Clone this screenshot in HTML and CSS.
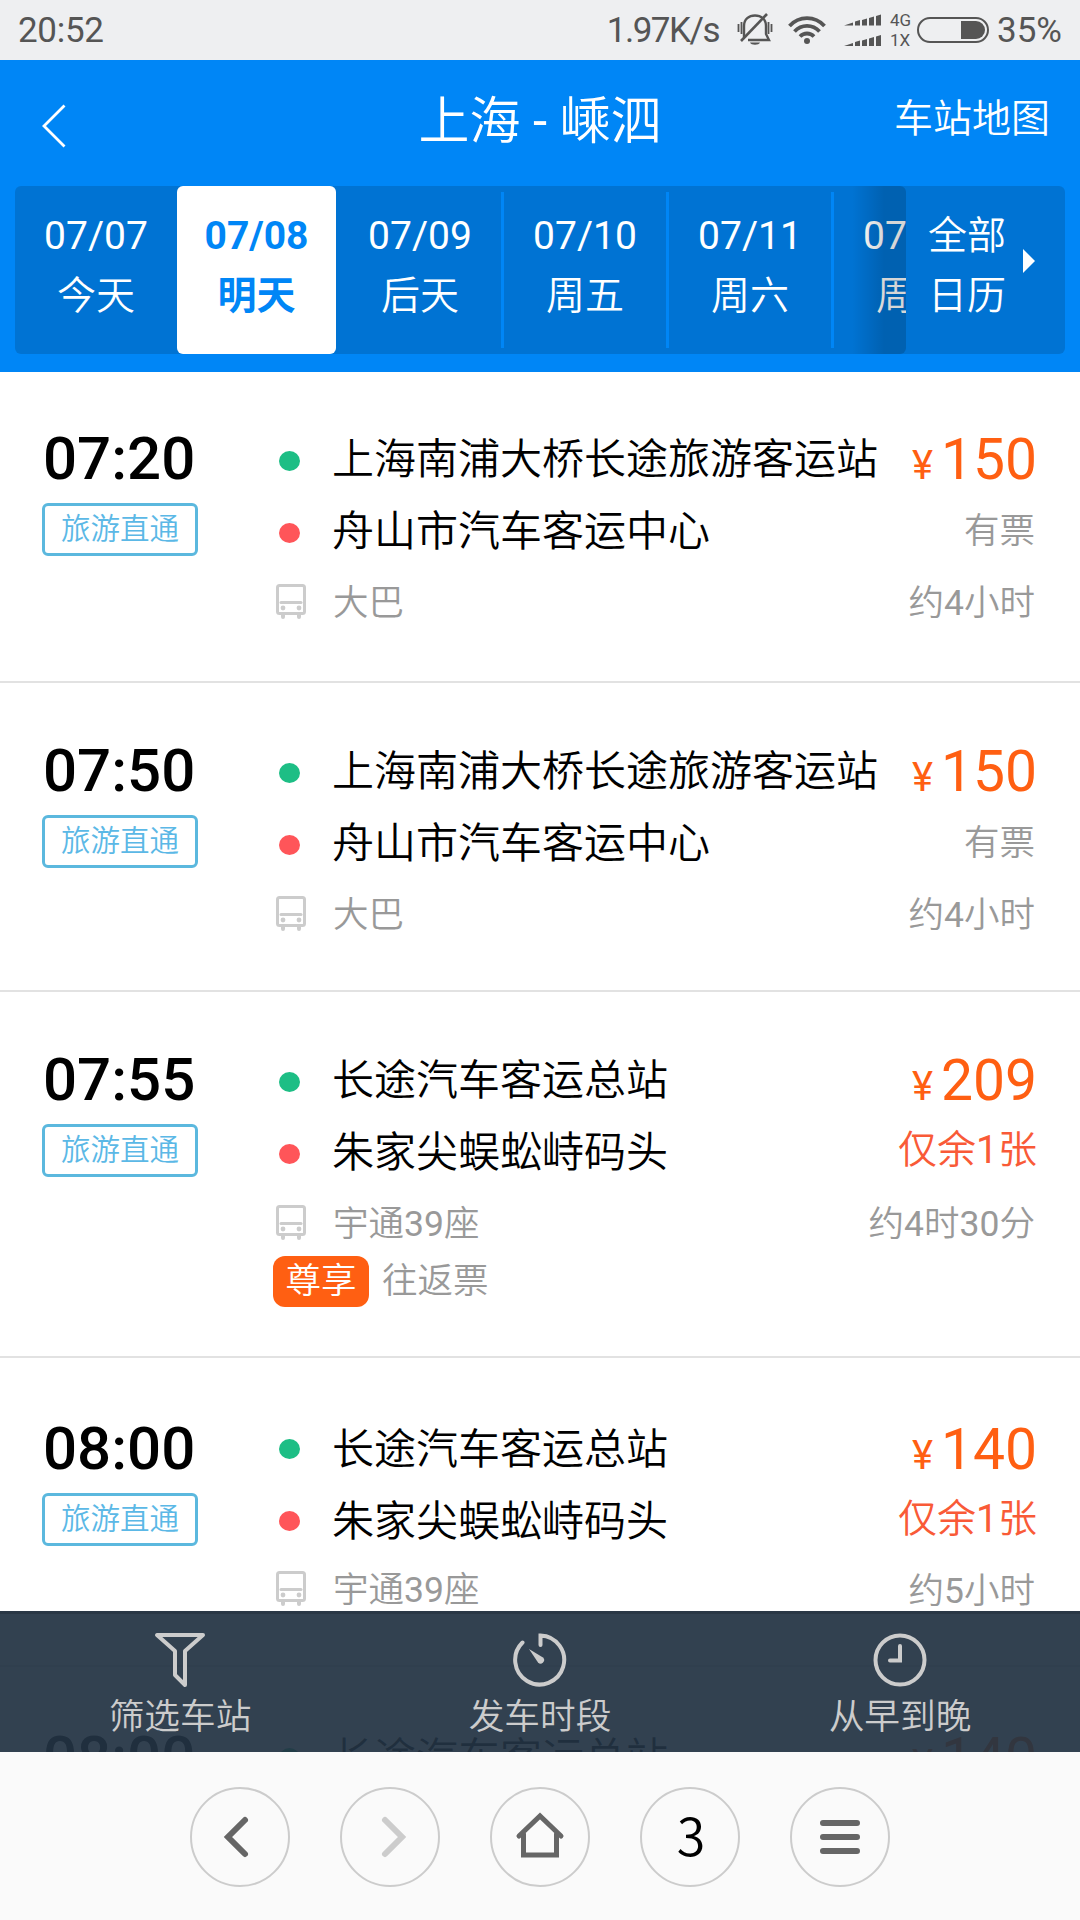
FILE: index.html
```html
<!DOCTYPE html>
<html lang="zh-CN">
<head>
  <meta charset="UTF-8">
  <title>上海 - 嵊泗</title>
  <link rel="stylesheet" href="styles.css">
</head>
<body>

<svg class="sprite" width="0" height="0">
  <symbol id="bus" viewBox="0 0 32 36">
    <rect x="2.5" y="2.5" width="27" height="28" rx="2" fill="none" stroke="#ccc" stroke-width="3"/>
    <path d="M6 19.5h20" stroke="#ccc" stroke-width="3" stroke-linecap="round"/>
    <circle cx="8" cy="25" r="2.4" fill="#ccc"/>
    <circle cx="24" cy="25" r="2.4" fill="#ccc"/>
    <path d="M8 31v3M24 31v3" stroke="#ccc" stroke-width="4" stroke-linecap="round"/>
  </symbol>
</svg>

<div class="status">
  <span class="clock">20:52</span>
  <span class="speed">1.97K/s</span>
  <svg class="bell" width="36" height="34" viewBox="0 0 36 34" fill="none" stroke="#555" stroke-width="2.4">
    <path d="M7 24V13C7 6 12 2.5 18 2.5S29 6 29 13v8l3 6H11"/>
    <path d="M30 1L4 28" stroke-width="2.6"/>
    <path d="M1.5 11v8M4.5 9v12M31.5 9v12M34.5 11v8" stroke-width="1.8"/>
    <path d="M13 29.5h10c-1 3-9 3-10 0z" fill="#555" stroke="none"/>
  </svg>
  <svg class="wifi" width="38" height="28" viewBox="0 0 38 28" fill="none" stroke="#555" stroke-width="3.8">
    <path d="M1.5 10C11-.5 27-.5 36.5 10"/>
    <path d="M6.5 15.5c7-7.5 18-7.5 25 0"/>
    <path d="M12 20.5c4-4 10-4 14 0"/>
    <circle cx="19" cy="25" r="3" fill="#555" stroke="none"/>
  </svg>
  <svg class="signal" width="37" height="33" viewBox="0 0 37 33" fill="#555">
    <path id="bars" d="M0 11.5l9-3v3zM11 7.5l5-1.5v5.5h-5zM18 6l5-1.500v7h-5zM25 4l5-1.500v9h-5zM32 2l5-1.500v11h-5z"/>
    <use href="#bars" y="20.5"/>
  </svg>
  <div class="net"><span>4G</span><span>1X</span></div>
  <div class="battery"><i></i></div>
  <span class="percent">35%</span>
</div>

<div class="header">
  <div class="nav">
    <svg class="back" width="24" height="44" viewBox="0 0 24 44" fill="none" stroke="#fff" stroke-width="2.8">
      <path d="M22.5 1.5L2 22l20.5 20.5"/>
    </svg>
    <h1>上海 <em>-</em> 嵊泗</h1>
    <a class="map">车站地图</a>
  </div>
  <div class="dates">
    <div class="days">
      <div class="day first"><em>07/07</em><span>今天</span></div>
      <div class="day active"><em>07/08</em><span>明天</span></div>
      <div class="day"><em>07/09</em><span>后天</span></div>
      <div class="day"><em>07/10</em><span>周五</span></div>
      <div class="day"><em>07/11</em><span>周六</span></div>
      <div class="day"><em>07/12</em><span>周日</span></div>
    </div>
    <div class="all"><p>全部<br>日历</p><i></i></div>
  </div>
</div>

<div class="main">
  <div class="item top">
    <div class="left"><div class="time">07:20</div><span class="label">旅游直通</span></div>
    <div class="route">
      <div class="row"><i class="dot green"></i>上海南浦大桥长途旅游客运站</div>
      <div class="row"><i class="dot red"></i>舟山市汽车客运中心</div>
      <div class="row gray"><svg class="bus"><use href="#bus"/></svg>大巴</div>
    </div>
    <div class="right">
      <div class="price"><small>¥</small>150</div>
      <div class="ticket">有票</div>
      <div class="ticket">约<em>4</em>小时</div>
    </div>
  </div>

  <div class="item">
    <div class="left"><div class="time">07:50</div><span class="label">旅游直通</span></div>
    <div class="route">
      <div class="row"><i class="dot green"></i>上海南浦大桥长途旅游客运站</div>
      <div class="row"><i class="dot red"></i>舟山市汽车客运中心</div>
      <div class="row gray"><svg class="bus"><use href="#bus"/></svg>大巴</div>
    </div>
    <div class="right">
      <div class="price"><small>¥</small>150</div>
      <div class="ticket">有票</div>
      <div class="ticket">约<em>4</em>小时</div>
    </div>
  </div>

  <div class="item tall">
    <div class="left"><div class="time">07:55</div><span class="label">旅游直通</span></div>
    <div class="route">
      <div class="row"><i class="dot green"></i>长途汽车客运总站</div>
      <div class="row"><i class="dot red"></i>朱家尖蜈蚣峙码头</div>
      <div class="row gray"><svg class="bus"><use href="#bus"/></svg><span>宇通<em>39</em>座</span></div>
      <div class="extra"><b>尊享</b><span>往返票</span></div>
    </div>
    <div class="right">
      <div class="price"><small>¥</small>209</div>
      <div class="ticket few">仅余<em>1</em>张</div>
      <div class="ticket">约<em>4</em>时<em>30</em>分</div>
    </div>
  </div>

  <div class="item low">
    <div class="left"><div class="time">08:00</div><span class="label">旅游直通</span></div>
    <div class="route">
      <div class="row"><i class="dot green"></i>长途汽车客运总站</div>
      <div class="row"><i class="dot red"></i>朱家尖蜈蚣峙码头</div>
      <div class="row gray"><svg class="bus"><use href="#bus"/></svg><span>宇通<em>39</em>座</span></div>
    </div>
    <div class="right">
      <div class="price"><small>¥</small>140</div>
      <div class="ticket few">仅余<em>1</em>张</div>
      <div class="ticket">约<em>5</em>小时</div>
    </div>
  </div>

  <div class="item low">
    <div class="left"><div class="time">08:00</div></div>
    <div class="route">
      <div class="row"><i class="dot green"></i>长途汽车客运总站</div>
    </div>
    <div class="right">
      <div class="price"><small>¥</small>140</div>
    </div>
  </div>

  <div class="filter">
    <div class="tab">
      <svg width="56" height="56" viewBox="0 0 56 56" fill="none" stroke="#ccc" stroke-width="4" stroke-linejoin="round">
        <path d="M5 3h46L33 19v34l-10-10V19z"/>
      </svg>
      <span>筛选车站</span>
    </div>
    <div class="tab">
      <svg width="56" height="56" viewBox="0 0 56 56" fill="none" stroke="#ccc" stroke-width="4" stroke-linecap="round">
        <path d="M28.5 13V3.5a24.5 24.5 0 1 1-18 7"/>
        <path d="M17 17l14 8.5a3.5 3.5 0 0 1-5 5z" fill="#ccc" stroke="none"/>
      </svg>
      <span>发车时段</span>
    </div>
    <div class="tab">
      <svg width="56" height="56" viewBox="0 0 56 56" fill="none" stroke="#ccc" stroke-width="4" stroke-linecap="round">
        <circle cx="28" cy="28" r="24.5"/>
        <path d="M28 14v14.5h-10"/>
      </svg>
      <span>从早到晚</span>
    </div>
  </div>
</div>

<div class="toolbar">
  <div class="circle">
    <svg width="60" height="60" viewBox="0 0 60 60"><path d="M35 13L18 30l17 17"/></svg>
  </div>
  <div class="circle off">
    <svg width="60" height="60" viewBox="0 0 60 60"><path d="M25 13l17 17-17 17"/></svg>
  </div>
  <div class="circle">
    <svg class="home" width="60" height="60" viewBox="0 0 60 60"><path d="M9 29L30 9l21 20M13.5 27v21h33V27"/></svg>
  </div>
  <div class="circle num">3</div>
  <div class="circle">
    <svg class="menu" width="60" height="60" viewBox="0 0 60 60"><path d="M13 16h34M13 30h34M13 44h34"/></svg>
  </div>
</div>

</body>
</html>
```

FILE: styles.css
```css
* {
  box-sizing: border-box;
}

body {
  margin: 0;
  width: 1080px;
  height: 1920px;
  display: flex;
  flex-direction: column;
  overflow: hidden;
  background: #fff;
  color: #000;
  font-family: Roboto, "Noto Sans CJK SC", sans-serif;
  font-weight: 350;
}

/* 数字用常规字重 */
em {
  font-style: normal;
  font-weight: 400;
}

.sprite {
  display: none;
}

/* 状态栏 */
.status {
  height: 60px;
  flex: none;
  display: flex;
  align-items: center;
  padding: 0 18px;
  background: #eeeff1;
  color: #555;
  font-size: 35px;
  font-weight: 400;
}

.clock {
  letter-spacing: -0.3px;
}

.speed {
  margin-left: auto;
  letter-spacing: -1.5px;
}

.bell {
  margin-left: 18px;
}

.wifi {
  margin-left: 15px;
}

.signal {
  margin-left: 18px;
}

.net {
  display: flex;
  flex-direction: column;
  margin-left: 9px;
  width: 22px;
  font-size: 17px;
  line-height: 20px;
}

.battery {
  width: 72px;
  height: 26px;
  margin: 0 8px 0 5px;
  padding: 2px;
  border: 2px solid #555;
  border-radius: 13px;
}

.battery i {
  display: block;
  width: 24px;
  height: 18px;
  margin-left: auto;
  background: #555;
  border-radius: 0 9px 9px 0;
}

/* 头部 */
.header {
  height: 312px;
  flex: none;
  background: #0086f6;
  color: #fff;
}

.nav {
  height: 126px;
  display: grid;
  grid-template-columns: 1fr auto 1fr;
  align-items: center;
  padding: 0 30px;
}

.back {
  margin: 6px 0 0 12px;
}

h1 {
  margin: 0;
  padding-bottom: 12px;
  font-size: 51px;
  font-weight: 350;
}

.map {
  justify-self: end;
  padding-bottom: 17px;
  font-size: 39px;
}

.dates {
  display: flex;
  width: 1050px;
  height: 168px;
  margin-left: 15px;
  background: #0073d3;
  border-radius: 6px;
}

.days {
  position: relative;
  display: flex;
  width: 891px;
  overflow: hidden;
}

/* 右侧渐变阴影 */
.days::after {
  content: "";
  position: absolute;
  top: 0;
  right: 0;
  width: 54px;
  height: 168px;
  border-radius: 0 6px 6px 0;
  background: linear-gradient(to right, rgba(0, 0, 0, 0), rgba(0, 0, 0, 0.16) 60%);
}

.day {
  display: flex;
  flex: none;
  flex-direction: column;
  width: 165px;
  height: 156px;
  margin-top: 6px;
  padding: 14px 0 0;
  border-right: 3px solid #0086f6;
  font-size: 39px;
  line-height: 60px;
  text-align: center;
}

.day.first {
  width: 162px;
  border: none;
}

.day.active {
  width: 159px;
  height: 168px;
  margin: 0 3px 0 0;
  padding-top: 20px;
  border: none;
  border-radius: 6px;
  background: #fff;
  color: #0086f6;
  font-weight: 700;
}

.active em {
  font-weight: 700;
}

.all {
  display: flex;
  padding: 20px 0 0 22px;
  font-size: 39px;
  line-height: 60px;
}

.all p {
  margin: 0;
}

.all i {
  width: 0;
  height: 0;
  margin: 43px 0 0 17px;
  border: 12px solid transparent;
  border-left-color: #fff;
  border-right: none;
}

/* 班次列表 */
.main {
  position: relative;
  height: 1380px;
  flex: none;
  overflow: hidden;
}

.item {
  display: flex;
  height: 309px;
  padding: 52px 43px 0 42px;
  border-bottom: 2px solid #e2e2e2;
}

.item.top {
  height: 311px;
  padding-top: 51px;
}

.item.tall {
  height: 366px;
}

.item.low {
  padding-top: 55px;
}

.left {
  width: 231px;
}

.time {
  font-size: 60px;
  font-weight: 500;
  line-height: 72px;
  padding-left: 1px;
}

.label {
  display: block;
  width: 156px;
  height: 53px;
  margin-top: 8px;
  border: 3px solid #5bb8de;
  border-radius: 6px;
  color: #5bb8e6;
  font-size: 29.5px;
  line-height: 47px;
  text-align: center;
}

.route {
  flex: 1;
  white-space: nowrap;
}

.row {
  display: flex;
  align-items: center;
  height: 72px;
  padding-bottom: 7px;
  font-size: 42px;
}

.gray {
  color: #999;
  font-size: 35.5px;
}

.dot {
  width: 21px;
  height: 20px;
  margin: 10px 32px 0 6px;
  border-radius: 50%;
}

.low .dot {
  margin-top: 6px;
}

.low .gray {
  margin-top: -3px;
}

.green {
  background: #1dbe85;
}

.red {
  background: #ff5559;
}

.bus {
  width: 32px;
  height: 36px;
  margin: 2px 26px 0 2px;
}

.extra {
  display: flex;
  align-items: center;
  height: 56px;
  margin-top: -7px;
  color: #999;
  font-size: 35.5px;
}

.extra b {
  width: 96px;
  height: 51px;
  margin-right: 13px;
  border-radius: 12px;
  background: #ff5f12;
  color: #fff;
  font-weight: 350;
  line-height: 50px;
  text-align: center;
}

.extra span {
  padding-bottom: 7px;
}

.right {
  text-align: right;
  white-space: nowrap;
}

.price {
  height: 72px;
  color: #ff5f12;
  font-size: 57px;
  font-weight: 400;
  line-height: 74px;
}

.price small {
  margin-right: 8px;
  font-size: 40px;
}

.ticket {
  height: 72px;
  padding-right: 2px;
  color: #999;
  font-size: 35.5px;
  line-height: 72px;
}

.low .ticket {
  line-height: 68px;
}

.few {
  padding-right: 0;
  color: #f95a37;
  font-size: 39px;
  line-height: 68px;
}

/* 底部筛选 */
.filter {
  position: absolute;
  left: 0;
  right: 0;
  bottom: 0;
  display: flex;
  height: 141px;
  border-top: 3px solid #2a3745;
  background: rgba(34, 51, 67, 0.93);
  color: #ccc;
}

.tab {
  flex: 1;
  display: flex;
  flex-direction: column;
  align-items: center;
  padding-top: 18px;
  font-size: 35.7px;
  line-height: 59px;
}

/* 浏览器工具栏 */
.toolbar {
  flex: 1;
  display: flex;
  justify-content: center;
  gap: 50px;
  padding-top: 35px;
  background: #fafafa;
}

.circle {
  display: flex;
  align-items: center;
  justify-content: center;
  width: 100px;
  height: 100px;
  border: 2px solid #ccc;
  border-radius: 50%;
}

.circle svg {
  fill: none;
  stroke: #666;
  stroke-width: 6;
  stroke-linecap: round;
}

.circle .home {
  stroke-width: 5;
}

.off svg {
  stroke: #ccc;
}

.num {
  padding: 0 0 8px 2px;
  font-family: "Noto Sans CJK SC", sans-serif;
  font-size: 52px;
}
```
